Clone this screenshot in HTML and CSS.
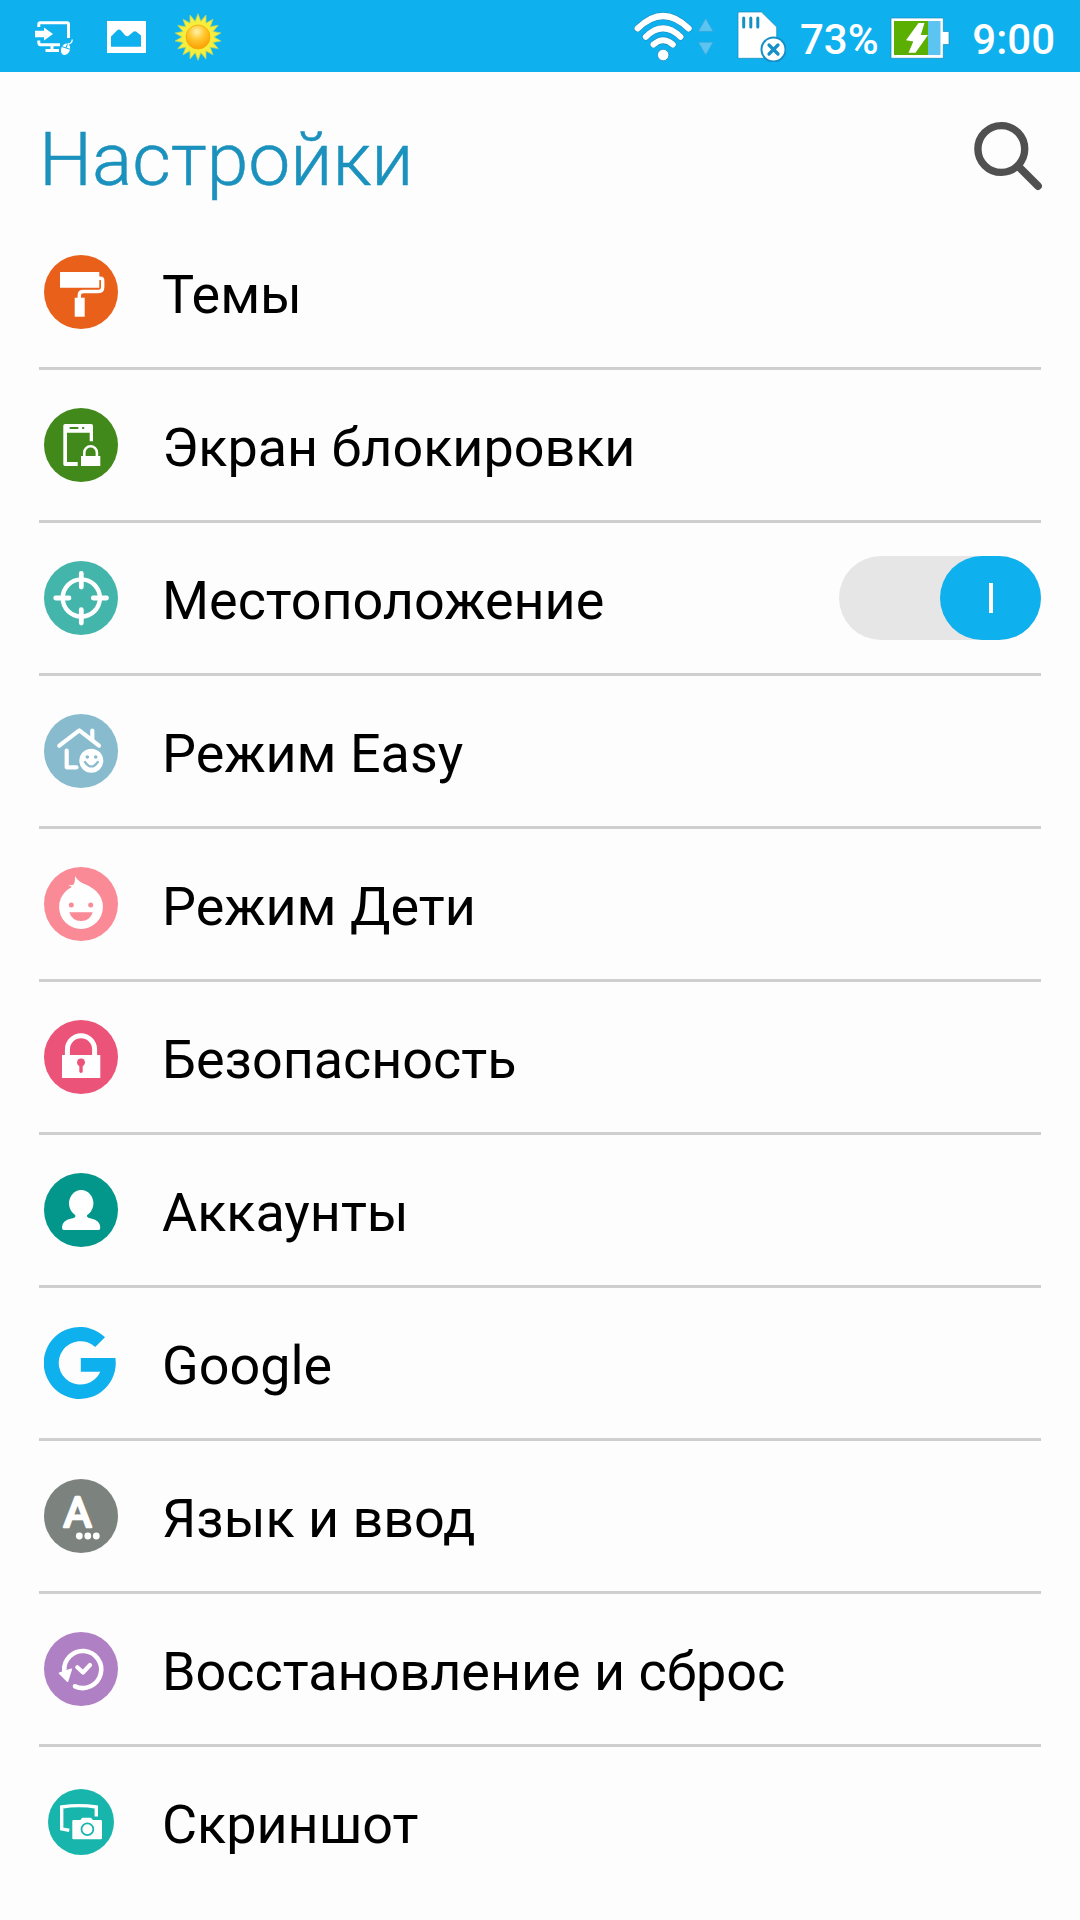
FILE: index.html
```html
<!DOCTYPE html>
<html lang="ru">
<head>
    <meta charset="UTF-8">
    <meta name="viewport" content="width=device-width, initial-scale=1.0">
    <title>Настройки</title>
    <link rel="stylesheet" href="styles.css">
</head>
<body>
    <div class="status-bar">
        <div class="notifications">
            <svg width="40" height="40" viewBox="34 17 40 40">
                <path d="M38.8 27V24.3Q38.8 22.8 40.3 22.8H67Q68.5 22.8 68.5 24.3V38M38.8 40.5V42.5Q38.8 44.7 40.5 44.7H60M52 45V50M45.5 50.6H59" fill="none" stroke="#fff" stroke-width="3"/>
                <path d="M35 30.8H44V27.6L53 34L44 40.4V37.2H35Z" fill="#fff"/>
                <ellipse cx="65.5" cy="49.3" rx="4.9" ry="6.4" transform="rotate(22 65.5 49.3)" fill="#fff" stroke="#0fb0ee" stroke-width="1"/>
                <path d="M61.2 46.3L70.5 49.5M66 48L68 42.5Q72 43.5 72 39.5" fill="none" stroke="#0fb0ee" stroke-width="1"/>
                <path d="M67.5 44Q72 44 72.3 39.5" fill="none" stroke="#fff" stroke-width="1.3"/>
            </svg>
            <svg width="39" height="32" viewBox="0 0 39 32">
                <path fill="#fff" fill-rule="evenodd" d="M0 0H39V32H0ZM4 25.7H34V14.5L29.5 10.8Q27.8 9.5 26 11L22 14.5Q20 16 18 14.3L14 9.5Q12 7.5 10 9.5L4 15.5Z"/>
            </svg>
            <svg class="sun" width="48" height="48" viewBox="-24 -24 48 48">
                <defs>
                    <radialGradient id="ball" cx="45%" cy="28%" r="75%">
                        <stop offset="0" stop-color="#fff2ae"/>
                        <stop offset="0.45" stop-color="#ffc72c"/>
                        <stop offset="1" stop-color="#f99b00"/>
                    </radialGradient>
                </defs>
                <polygon id="rays" points="" fill="#f5ee3c" stroke="#b5d66a" stroke-width="0.8"/>
                <circle r="12" fill="url(#ball)" stroke="#f5a80a" stroke-width="0.8"/>
            </svg>
        </div>
        <div class="system">
            <svg width="82" height="52" viewBox="633 11 82 52">
                <g fill="none" stroke-linecap="round">
                    <g stroke="#1689bd" stroke-width="7">
                        <path d="M637.6 29.5Q663 4.5 688.7 29.5M645.8 37.8Q663 21 680.5 37.8M653.5 45.5Q663 37 672.8 45.5"/>
                    </g>
                    <g stroke="#fff" stroke-width="6">
                        <path d="M637.6 29.5Q663 4.5 688.7 29.5M645.8 37.8Q663 21 680.5 37.8M653.5 45.5Q663 37 672.8 45.5"/>
                    </g>
                </g>
                <circle cx="663.2" cy="56" r="5.7" fill="#fff" stroke="#1689bd" stroke-width="0.7"/>
                <path d="M705.7 19.5L713 32.3H698.4ZM705.7 56L713 43.3H698.4Z" fill="#5cc4f0" stroke="#3da5d3" stroke-width="0.6"/>
            </svg>
            <svg class="sd" width="50" height="52" viewBox="736 11 50 52">
                <path d="M738 14.5Q738 13 739.5 13H761.5L776.7 28V59.3H738Z" fill="#fff" stroke="#1689bd" stroke-width="0.7"/>
                <path d="M743.7 19V28M750.8 19V28M757.8 19V28" stroke="#168fc6" stroke-width="3" stroke-linecap="round"/>
                <circle cx="773.5" cy="50.5" r="13" fill="#168fc6"/>
                <circle cx="773.5" cy="50.5" r="11" fill="#fff"/>
                <path d="M769 46L778 55M778 46L769 55" stroke="#168fc6" stroke-width="3.2" stroke-linecap="round"/>
            </svg>
            <span class="percent">73%</span>
            <svg class="battery" width="60" height="42" viewBox="890 17 60 42">
                <path d="M891 18H943.3V31.5H949V44.5H943.3V58.3H891Z" fill="#fff" stroke="#1689bd" stroke-width="0.7"/>
                <path d="M894 21H928V55H894Z" fill="#5aaf00"/>
                <path d="M928 21H940.5V55H928Z" fill="#5cc4f0"/>
                <path d="M918.5 23H924.5L920.8 35H928L915.5 52.7H908.5L913.3 41.5L906 40.3Z" fill="#fff"/>
            </svg>
            <span class="time">9:00</span>
        </div>
    </div>

    <header>
        <h1>Настройки</h1>
        <svg width="70" height="70" viewBox="973 121 70 70">
            <circle cx="1001.3" cy="149" r="23.4" fill="none" stroke="#505050" stroke-width="7.4"/>
            <path d="M1018 166L1038 186" stroke="#505050" stroke-width="7.8" stroke-linecap="round"/>
        </svg>
    </header>

    <ul class="settings">
        <li>
            <svg class="icon" viewBox="0 0 74 74">
                <circle cx="37" cy="37" r="37" fill="#e8601a"/>
                <path d="M16 17H55.3V32.7H16Z" fill="#fff"/>
                <path d="M55 23.3H56.5Q58.7 23.3 58.7 25.5V32Q58.7 36.5 54.5 36.5H39.5Q35.3 36.5 35.3 40V44" fill="none" stroke="#fff" stroke-width="3.4"/>
                <path d="M30.7 42.7H40.7V61.7H30.7Z" fill="#fff"/>
            </svg>
            <span>Темы</span>
        </li>
        <li>
            <svg class="icon" viewBox="0 0 74 74">
                <circle cx="37" cy="37" r="37" fill="#41891b"/>
                <path fill="#fff" d="M21 16H47.3Q49 16 49 17.7V33.3H45.7V24.7H23V54H33.7V58H21Q19.3 58 19.3 56.3V17.7Q19.3 16 21 16Z"/>
                <path d="M26.5 20H33.5M39 20H39.3" stroke="#41891b" stroke-width="2.2" stroke-linecap="round"/>
                <path d="M37 48H56.3V58H37Z" fill="#fff"/>
                <path d="M40.3 49V44.5A6.3 6.3 0 0 1 52.9 44.5V49" fill="none" stroke="#fff" stroke-width="2.6"/>
            </svg>
            <span>Экран блокировки</span>
        </li>
        <li>
            <svg class="icon" viewBox="0 0 74 74">
                <circle cx="37" cy="37" r="37" fill="#43b5ab"/>
                <circle cx="37.3" cy="37" r="18.6" fill="none" stroke="#fff" stroke-width="4.4"/>
                <path d="M37.3 12.3V26M37.3 48.7V62M11.7 37H25M49.3 37H62.5" stroke="#fff" stroke-width="4.8" stroke-linecap="round"/>
            </svg>
            <span>Местоположение</span>
            <div class="toggle"><div class="knob"></div></div>
        </li>
        <li>
            <svg class="icon" viewBox="0 0 74 74">
                <circle cx="37" cy="37" r="37" fill="#87bbcd"/>
                <g fill="none" stroke="#fff" stroke-width="4.2" stroke-linecap="round" stroke-linejoin="round">
                    <path d="M15.3 31.7L35.3 16.3L55 31.7M48.3 16.5V26"/>
                    <path d="M22.7 36.5V53.3H32.5"/>
                </g>
                <circle cx="47.3" cy="46.7" r="12" fill="#fff"/>
                <circle cx="43.3" cy="43" r="1.8" fill="#87bbcd"/>
                <circle cx="51.7" cy="43" r="1.8" fill="#87bbcd"/>
                <path d="M41 48Q47.3 57 53.8 48" fill="none" stroke="#87bbcd" stroke-width="2.2" stroke-linecap="round"/>
            </svg>
            <span>Режим Easy</span>
        </li>
        <li>
            <svg class="icon" viewBox="0 0 74 74">
                <circle cx="37" cy="37" r="37" fill="#f98a96"/>
                <circle cx="37" cy="40" r="21.9" fill="#fff"/>
                <path d="M24 23Q28 20.5 27.5 19.8L24.3 17.7Q28 18.5 29.5 17.5Q31.2 15.5 31 9Q34 14.5 41 17.3Q46 19 49 22L37 32Z" fill="#fff"/>
                <circle cx="27.3" cy="38" r="2.5" fill="#f98a96"/>
                <circle cx="46.7" cy="38" r="2.5" fill="#f98a96"/>
                <path d="M25.3 45.3H48.7Q46 54 37 54Q28 54 25.3 45.3Z" fill="#f98a96"/>
            </svg>
            <span>Режим Дети</span>
        </li>
        <li>
            <svg class="icon" viewBox="0 0 74 74">
                <circle cx="37" cy="37" r="37" fill="#eb5478"/>
                <path d="M18 35H56.3V58H18Z" fill="#fff"/>
                <path d="M23.4 36V29.3A13.6 13.6 0 0 1 50.6 29.3V36" fill="none" stroke="#fff" stroke-width="5"/>
                <circle cx="37" cy="42.3" r="3.9" fill="#eb5478"/>
                <path d="M37 43V51.3" stroke="#eb5478" stroke-width="3.4" stroke-linecap="round"/>
            </svg>
            <span>Безопасность</span>
        </li>
        <li>
            <svg class="icon" viewBox="0 0 74 74">
                <circle cx="37" cy="37" r="37" fill="#03968a"/>
                <ellipse cx="37.2" cy="30.3" rx="12.2" ry="13.3" fill="#fff"/>
                <path d="M31.3 40H43V43.5Q43.5 45 47 45.6Q56.3 47.5 56.3 54.5Q56.3 57 54.5 57H19.8Q18 57 18 54.5Q18 47.5 27.3 45.6Q31 45 31.3 43.5Z" fill="#fff"/>
            </svg>
            <span>Аккаунты</span>
        </li>
        <li>
            <svg class="icon" viewBox="0 -1 74 74">
                <path d="M61 10.3A36 36 0 1 0 71.4 31H36.8V44.7H56.3A21.7 21.7 0 1 1 51.2 20Z" fill="#0fb0ee"/>
            </svg>
            <span>Google</span>
        </li>
        <li>
            <svg class="icon" viewBox="0 0 74 74">
                <circle cx="37" cy="37" r="37" fill="#7c827d"/>
                <text class="letter" x="33.5" y="48">A</text>
                <circle cx="35.3" cy="57" r="3.4" fill="#fff"/>
                <circle cx="43.8" cy="57" r="3.4" fill="#fff"/>
                <circle cx="52.3" cy="57" r="3.4" fill="#fff"/>
            </svg>
            <span>Язык и ввод</span>
        </li>
        <li>
            <svg class="icon" viewBox="0 0 74 74">
                <circle cx="37" cy="37" r="37" fill="#af80c3"/>
                <path d="M31 54.3A18.5 18.5 0 1 0 20.3 39" fill="none" stroke="#fff" stroke-width="4.6" stroke-linecap="round"/>
                <path d="M15.5 41.3L27.3 37.3L23.5 49.3Z" fill="#fff" stroke="#fff" stroke-width="1.6" stroke-linejoin="round"/>
                <path d="M33.3 35.2L39 40.5L46 33" fill="none" stroke="#fff" stroke-width="4.2" stroke-linecap="round" stroke-linejoin="round"/>
            </svg>
            <span>Восстановление и сброс</span>
        </li>
        <li>
            <svg class="icon" viewBox="0 0 74 74">
                <circle cx="37" cy="37" r="33" fill="#18b5ad"/>
                <path d="M25.3 45.3L17.7 43.8V22Q35 19.3 52.3 22V31.5" fill="none" stroke="#fff" stroke-width="3.4"/>
                <path d="M29.5 35H36.3L38.3 32.7H47L49 35H56.8Q58 35 58 36.2V53Q58 54.2 56.8 54.2H29.5Q28.3 54.2 28.3 53V36.2Q28.3 35 29.5 35Z" fill="#fff"/>
                <circle cx="43.4" cy="44.3" r="5.9" fill="#fff" stroke="#18b5ad" stroke-width="1.8"/>
            </svg>
            <span>Скриншот</span>
        </li>
    </ul>

    <script>
        const points = [];
        const rayCount = 18;
        for (let i = 0; i < rayCount * 2; i++) {
            const radius = i % 2 === 0 ? 23.3 : 16;
            const angle = Math.PI * i / rayCount - Math.PI / 2;
            points.push(`${(radius * Math.cos(angle)).toFixed(1)},${(radius * Math.sin(angle)).toFixed(1)}`);
        }
        document.getElementById("rays").setAttribute("points", points.join(" "));
    </script>
</body>
</html>
```
FILE: styles.css
```css
* {
    box-sizing: border-box;
}
body {
    font-family: Roboto, sans-serif;
    margin: 0;
    height: 1920px;
    overflow: hidden;
    background-color: #fdfdfd;
    color: #000;
}
svg {
    display: block;
    flex-shrink: 0;
}
.status-bar {
    display: flex;
    justify-content: space-between;
    height: 72px;
    padding: 0 25px 0 34px;
    background-color: #0fb0ee;
    color: #fff;
    font-size: 42px;
    font-weight: 500;
}
.notifications,
.system {
    display: flex;
    align-items: center;
}
.notifications {
    gap: 33px;
    padding-top: 2px;
}
.notifications .sun {
    margin-left: -5px;
}
.system {
    line-height: 72px;
}
.sd {
    margin-left: 21px;
}
.percent {
    width: 90px;
    margin-left: 14px;
    padding-top: 7px;
}
.battery {
    margin-top: 4px;
}
.time {
    width: 83px;
    margin-left: 22px;
    padding-top: 7px;
    text-align: right;
}
header {
    display: flex;
    align-items: center;
    justify-content: space-between;
    height: 145px;
    padding: 22px 37px 0 39px;
}
h1 {
    margin: 0;
    padding-top: 6px;
    color: #1b91bd;
    font-size: 75px;
    font-weight: 300;
    -webkit-text-stroke: 0.5px #1b91bd;
}
.settings {
    list-style: none;
    margin: 0 39px;
    padding: 0;
}
.settings li {
    display: flex;
    align-items: center;
    height: 153px;
    padding-left: 5px;
    border-bottom: 3px solid #cfcfcf;
    font-size: 53.9px;
}
.settings li:last-child {
    border-bottom-color: transparent;
}
.settings span {
    margin-left: 44px;
    padding-top: 5px;
}
.icon {
    width: 74px;
    height: 74px;
}
.letter {
    font-size: 43px;
    font-weight: 400;
    text-anchor: middle;
    fill: #fff;
    stroke: #fff;
    stroke-width: 2.6px;
    stroke-linejoin: round;
}
.toggle {
    display: flex;
    justify-content: flex-end;
    width: 202px;
    height: 84px;
    margin-left: auto;
    border-radius: 42px;
    background-color: #e6e6e6;
}
.knob {
    display: flex;
    align-items: center;
    justify-content: center;
    width: 101px;
    border-radius: 42px;
    background-color: #0fb0ee;
}
.knob::before {
    content: "";
    width: 4px;
    height: 30px;
    background-color: #fff;
}
```
